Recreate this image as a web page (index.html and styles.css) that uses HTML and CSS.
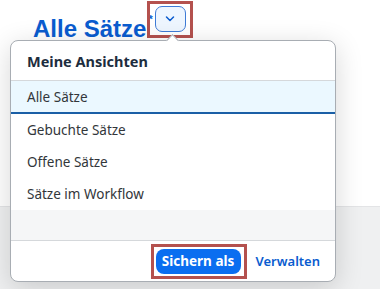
FILE: index.html
```html
<!DOCTYPE html>
<html lang="de">

<head>
  <meta charset="UTF-8">
  <meta name="viewport" content="width=device-width, initial-scale=1.0">
  <title>Meine Ansichten</title>
  <link rel="stylesheet" href="styles.css">
</head>

<body>

  <div class="page">
    <div class="header">
      <h1 class="title">Alle Sätze<span class="star">*</span></h1>
      <span class="mark mark-top">
        <button class="toggle" aria-label="Ansichten">
          <svg width="12" height="8" viewBox="0 0 12 8">
            <path d="M2.5 2 L6 5.5 L9.5 2" fill="none" stroke="#0a5ccf" stroke-width="1.5" stroke-linecap="round" stroke-linejoin="round"/>
          </svg>
        </button>
      </span>
    </div>
    <div class="content"></div>
  </div>

  <div class="popover">
    <span class="arrow"></span>
    <div class="pop-head">Meine Ansichten</div>
    <ul class="views">
      <li class="selected">Alle Sätze</li>
      <li>Gebuchte Sätze</li>
      <li>Offene Sätze</li>
      <li>Sätze im Workflow</li>
    </ul>
    <div class="filler"></div>
    <div class="pop-foot">
      <span class="mark mark-bottom">
        <button class="primary">Sichern als</button>
      </span>
      <button class="link">Verwalten</button>
    </div>
  </div>

</body>

</html>
```

FILE: styles.css
```css
body {
  margin: 0;
  font-family: "Noto Sans", Arial, sans-serif;
  background: #fff;
  color: #32363a;
}

.page {
  height: 289px;
  display: flex;
  flex-direction: column;
}

.header {
  height: 206px;
  display: flex;
  align-items: flex-start;
  padding-left: 33px;
  box-sizing: border-box;
}

.title {
  margin: 4px 0 0 0;
  font-family: "Liberation Sans", Arial, sans-serif;
  font-size: 24px;
  font-weight: bold;
  color: #0a5ccf;
  line-height: 30px;
}

.star {
  font-size: 11px;
  vertical-align: 14px;
  margin-left: 2px;
}

.mark {
  display: inline-flex;
  border: 3px solid #b4514e;
}

.mark-top {
  margin-left: -6px;
  margin-top: 1px;
  padding: 2px 4px 3px 5px;
}

.toggle {
  width: 31px;
  height: 26px;
  border: 1px solid #3e7bd6;
  border-radius: 7px;
  background: #eef6ff;
  display: flex;
  align-items: center;
  justify-content: center;
  padding: 0;
}

.content {
  flex: 1;
  background: #eff0f1;
  border-top: 1px solid #e3e4e6;
}

.popover {
  position: absolute;
  left: 10px;
  top: 40px;
  width: 326px;
  height: 242px;
  box-sizing: border-box;
  background: #fff;
  border: 1px solid #a8adb3;
  border-radius: 8px;
  box-shadow: 0 6px 28px rgba(0, 0, 0, 0.16);
  display: flex;
  flex-direction: column;
}

.arrow {
  position: absolute;
  left: 157px;
  top: -5px;
  width: 8px;
  height: 8px;
  background: #fff;
  border-top: 1px solid #a8adb3;
  border-left: 1px solid #a8adb3;
  transform: rotate(45deg);
}

.pop-head {
  height: 40px;
  flex: none;
  display: flex;
  align-items: center;
  padding-left: 16px;
  font-size: 14.5px;
  font-weight: bold;
  color: #1d2d3e;
  border-bottom: 1px solid #d5d8db;
  box-sizing: border-box;
  position: relative;
}

.views {
  list-style: none;
  margin: 0;
  padding: 0;
}

.views li {
  height: 32px;
  display: flex;
  align-items: center;
  padding-left: 16px;
  font-size: 13.5px;
  color: #32363a;
}

.views li.selected {
  height: 33px;
  background: #ebf8ff;
  border-bottom: 2px solid #1a5fa6;
  box-sizing: border-box;
}

.filler {
  flex: 1;
  background: #f5f6f7;
}

.pop-foot {
  height: 41px;
  flex: none;
  border-top: 1px solid #d5d8db;
  display: flex;
  align-items: center;
  justify-content: flex-end;
  padding-right: 15px;
  box-sizing: border-box;
  gap: 9px;
}

.mark-bottom {
  padding: 2px 3px 2px 2px;
}

.primary {
  height: 25px;
  width: 85px;
  border: none;
  border-radius: 8px;
  background: #0a6ef0;
  color: #fff;
  font-family: "Noto Sans", Arial, sans-serif;
  font-size: 13.5px;
  font-weight: bold;
  padding: 0;
}

.link {
  border: none;
  background: none;
  color: #0a5ccf;
  font-family: "Noto Sans", Arial, sans-serif;
  font-size: 13px;
  font-weight: 600;
  padding: 0;
}
```
